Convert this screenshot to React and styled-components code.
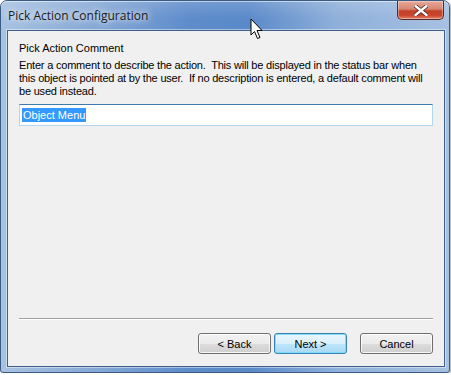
import styled, { createGlobalStyle } from "styled-components";

const Global = createGlobalStyle`
  html, body {
    margin: 0;
    padding: 0;
    background: #ffffff;
  }
  body {
    font-family: "Liberation Sans", Arial, sans-serif;
  }
`;

function Cursor() {
  return (
    <CursorWrap>
      <svg width="14" height="22" viewBox="0 0 14 22">
        <path
          d="M1 1 L1 17 L4.5 13.5 L7.5 20.5 L10 19.5 L7 12.5 L12 12.5 Z"
          fill="#ffffff"
          stroke="#000000"
          strokeWidth="1"
          strokeLinejoin="miter"
        />
      </svg>
    </CursorWrap>
  );
}

export default function App() {
  return (
    <>
      <Global />
      <Window>
        <TitleBar>
          <Title>Pick Action Configuration</Title>
          <CloseButton>
            <svg width="14" height="11" viewBox="0 0 14 11">
              <path
                d="M1.5 1 L12.5 10 M12.5 1 L1.5 10"
                stroke="#4a2020"
                strokeWidth="4"
                strokeLinecap="round"
              />
              <path
                d="M1.5 1 L12.5 10 M12.5 1 L1.5 10"
                stroke="#ffffff"
                strokeWidth="2.4"
                strokeLinecap="round"
              />
            </svg>
          </CloseButton>
          <Cursor />
        </TitleBar>
        <Client>
          <Content>
            <Heading>Pick Action Comment</Heading>
            <Description>
              {"Enter a comment to describe the action.  This will be displayed in the status bar when\nthis object is pointed at by the user.  If no description is entered, a default comment will\nbe used instead."}
            </Description>
            <Field>
              <Selected>Object Menu</Selected>
            </Field>
          </Content>
          <Separator />
          <ButtonRow>
            <Button>&lt; Back</Button>
            <Button $default>Next &gt;</Button>
            <Button $gap>Cancel</Button>
          </ButtonRow>
        </Client>
      </Window>
    </>
  );
}

const Window = styled.div`
  position: relative;
  width: 450px;
  height: 373px;
  box-sizing: border-box;
  display: flex;
  flex-direction: column;
  border: 1px solid #3b5a82;
  border-radius: 7px 7px 3px 3px;
  background: linear-gradient(
      90deg,
      #a8c2e2 0%,
      #88aad6 20%,
      #5e8ccb 42%,
      #5a89c9 55%,
      #8fb0da 75%,
      #a6c1e2 100%
    );
  box-shadow: 1px 1px 2px rgba(0, 0, 0, 0.35);
`;

const TitleBar = styled.div`
  position: relative;
  height: 29px;
  display: flex;
  justify-content: space-between;
  align-items: flex-start;
  padding-left: 7px;
  box-shadow: inset 0 1px 0 rgba(255, 255, 255, 0.55);
  border-radius: 6px 6px 0 0;
  background: linear-gradient(
    180deg,
    rgba(255, 255, 255, 0.15) 0%,
    rgba(255, 255, 255, 0) 60%
  );
`;

const Title = styled.div`
  margin-top: 8px;
  font-family: "Open Sans", "Liberation Sans", sans-serif;
  font-size: 12px;
  line-height: 14px;
  color: #1a1a1a;
  text-shadow: 0 0 6px rgba(255, 255, 255, 0.9), 0 0 10px rgba(255, 255, 255, 0.7);
`;

const CloseButton = styled.div`
  width: 47px;
  height: 19px;
  margin-right: 5px;
  box-sizing: border-box;
  display: flex;
  align-items: center;
  justify-content: center;
  border: 1px solid #5a2a2a;
  border-top: none;
  border-radius: 0 0 5px 5px;
  background: linear-gradient(
    180deg,
    #e6a899 0%,
    #d88572 45%,
    #c24127 55%,
    #c9472c 80%,
    #e3846c 100%
  );
  box-shadow: inset 0 0 0 1px rgba(255, 255, 255, 0.35);
`;

const CursorWrap = styled.div`
  position: absolute;
  left: 249px;
  top: 17px;
  width: 14px;
  height: 22px;
`;

const Client = styled.div`
  flex: 1;
  margin: 0 4px 5px 6px;
  display: flex;
  flex-direction: column;
  background: #f0f0f0;
  border: 1px solid #3f5f8a;
  box-shadow: 0 0 0 1px rgba(255, 255, 255, 0.45);
  font-family: "Liberation Sans", Arial, sans-serif;
  font-size: 11px;
  color: #000000;
`;

const Content = styled.div`
  flex: 1;
  display: flex;
  flex-direction: column;
  padding: 10px 11px 0 11px;
`;

const Heading = styled.div`
  line-height: 13px;
  margin-top: 1px;
`;

const Description = styled.div`
  margin-top: 4px;
  line-height: 13px;
  white-space: pre;
  letter-spacing: -0.2px;
`;

const Field = styled.div`
  margin-top: 6px;
  height: 22px;
  box-sizing: border-box;
  display: flex;
  align-items: center;
  padding-left: 2px;
  background: #ffffff;
  border: 1px solid #b4d7ef;
  border-top-color: #3d7bad;
`;

const Selected = styled.span`
  background: #3399ff;
  color: #ffffff;
  line-height: 14px;
  padding: 0 1px;
`;

const Separator = styled.div`
  height: 0;
  margin: 0 11px;
  border-top: 1px solid #a0a0a0;
  border-bottom: 1px solid #ffffff;
`;

const ButtonRow = styled.div`
  display: flex;
  justify-content: flex-end;
  gap: 3px;
  padding: 13px 11px 12px 11px;
`;

const Button = styled.div`
  width: 73px;
  height: 21px;
  box-sizing: border-box;
  display: flex;
  align-items: center;
  justify-content: center;
  margin-left: ${(p) => (p.$gap ? "10px" : "0")};
  border: 1px solid ${(p) => (p.$default ? "#3c7fb1" : "#707070")};
  border-radius: 3px;
  background: ${(p) =>
    p.$default
      ? "linear-gradient(180deg, #eaf6fd 0%, #d9f0fc 50%, #bee6fd 51%, #a7d9f5 100%)"
      : "linear-gradient(180deg, #f2f2f2 0%, #ebebeb 50%, #dddddd 51%, #cfcfcf 100%)"};
  box-shadow: inset 0 0 0 1px
    ${(p) => (p.$default ? "rgba(120, 220, 250, 0.9)" : "rgba(255, 255, 255, 0.8)")};
  color: #000000;
`;
